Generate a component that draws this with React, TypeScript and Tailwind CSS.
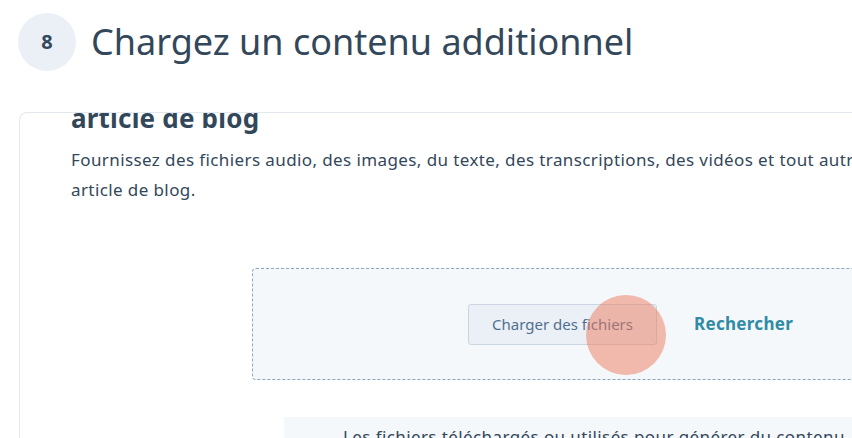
import React from 'react';

export default function App() {
  return (
    <div className="relative w-[852px] h-[438px] overflow-hidden bg-white text-[#33475b] font-['Noto_Sans',sans-serif]">
      {/* Step header */}
      <div className="flex items-center gap-[15px] pt-[13px] pl-[18px]">
        <div className="flex h-[58px] w-[58px] items-center justify-center rounded-full bg-[#eaf0f6] text-[20px] font-bold">
          8
        </div>
        <h1 className="text-[36px] leading-[44px] font-normal">Chargez un contenu additionnel</h1>
      </div>

      {/* Card */}
      <div className="mt-[41px] ml-[19px] h-[340px] overflow-hidden rounded-tl-[8px] border-l border-t border-[#e3e8ee]">
        <h2 className="mt-[-12px] pl-[51px] text-[26px] leading-[34px] font-bold tracking-[0.2px]">article de blog</h2>
        <p className="mt-[10px] whitespace-nowrap pl-[51px] text-[17px] leading-[30px] tracking-[0.4px]">
          Fournissez des fichiers audio, des images, du texte, des transcriptions, des vidéos et tout autre contenu utile pour générer votre
          <br />
          article de blog.
        </p>

        <div className="mt-[63px] ml-[232px] flex h-[112px] w-[700px] items-center rounded-[4px] border border-dashed border-[#8fa6bf] bg-[#f5f8fa] pl-[215px]">
          <button className="h-[41px] w-[189px] rounded-[3px] border border-[#cbd6e2] bg-[#eaf0f6] text-[15px] text-[#516f90]">
            Charger des fichiers
          </button>
          <button className="ml-[37px] text-[17px] font-bold tracking-[0.3px] text-[#2f8ba6]">Rechercher</button>
        </div>

        <div className="mt-[37px] ml-[264px] h-[40px] bg-[#f5f8fa] pt-[8px] pl-[59px] whitespace-nowrap text-[17px] leading-[24px] tracking-[0.4px]">
          Les fichiers téléchargés ou utilisés pour générer du contenu
        </div>
      </div>

      {/* Click highlight */}
      <div className="absolute left-[586px] top-[295px] h-[80px] w-[80px] rounded-full bg-[#ec7a5e]/50" />
    </div>
  );
}
